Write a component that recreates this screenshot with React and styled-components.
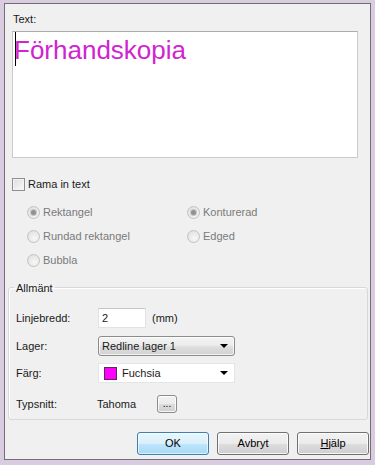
import React from 'react';
import styled, { createGlobalStyle } from 'styled-components';

const Global = createGlobalStyle`
  html, body { margin: 0; padding: 0; background: #d9cbe0; }
  body {
    width: 375px; height: 465px; overflow: hidden;
    font-family: "Liberation Sans", Arial, sans-serif;
    font-size: 11px; line-height: 13px; color: #1a1a1a;
  }
  * { box-sizing: border-box; }
`;

const Window = styled.div`
  margin: 3px 0 0 4px;
  width: 367px;
  height: 457px;
  border: 1px solid #707074;
  background: #f0f0f0;
  display: flex;
  flex-direction: column;
  padding: 0 2px 0 3px;
`;

const TextLabel = styled.div`
  margin: 9px 0 0 5px;
  height: 13px;
`;

const Editor = styled.div`
  position: relative;
  margin: 5px 0 0 4px;
  width: 346px;
  height: 127px;
  background: #fff;
  border: 1px solid #c9cbd0;
  border-top-color: #abadb3;
  padding: 3px 0 0 1px;
  font-size: 26px;
  line-height: 30px;
  color: #d024d0;
`;

const Caret = styled.span`
  position: absolute;
  left: 2px;
  top: 0;
  width: 1px;
  height: 34px;
  background: #000;
`;

const CheckRow = styled.label`
  display: flex;
  align-items: center;
  gap: 3px;
  margin: 20px 0 0 4px;
  height: 13px;
`;

const CheckBox = styled.span`
  width: 13px;
  height: 13px;
  border: 1px solid #8f8f8f;
  background: linear-gradient(135deg, #dcdcdc, #fbfbfb);
  box-shadow: inset 0 0 0 1px #f4f4f4;
`;

const RadioGrid = styled.div`
  display: grid;
  grid-template-columns: 160px auto;
  grid-auto-rows: 13px;
  row-gap: 11px;
  margin: 15px 0 0 19px;
`;

const RadioItem = styled.div`
  display: flex;
  align-items: center;
  gap: 3px;
  color: #7a7a7a;
  grid-column: ${p => p.$col};
  grid-row: ${p => p.$row};
`;

const RadioDot = styled.span`
  position: relative;
  width: 13px;
  height: 13px;
  border-radius: 50%;
  border: 1px solid #c2c2c2;
  background: radial-gradient(circle at 60% 65%, #f8f8f8 0%, #e4e4e4 70%, #d8d8d8 100%);
  &::after {
    content: '';
    display: ${p => (p.$checked ? 'block' : 'none')};
    position: absolute;
    left: 2px; top: 2px;
    width: 7px; height: 7px;
    border-radius: 50%;
    background: radial-gradient(circle, #8a8a8a 0%, #9a9a9a 45%, #c8c8c8 60%, #b4b4b4 100%);
  }
`;

const Group = styled.fieldset`
  margin: 12px 0 0 0;
  padding: 0 0 5px 7px;
  border: 1px solid #d5d9dc;
  border-radius: 3px;
  box-shadow: inset 1px 1px 0 #fff;
  display: flex;
  flex-direction: column;
`;

const Legend = styled.legend`
  margin-left: -2px;
  padding: 3px 2px 0;
  height: 16px;
`;

const Row = styled.div`
  display: flex;
  align-items: center;
  height: 20px;
  margin-top: ${p => p.$top}px;
`;

const RowLabel = styled.span`
  width: 82px;
  flex: none;
`;

const NumInput = styled.div`
  width: 48px;
  height: 20px;
  background: #fff;
  border: 1px solid #e0e2e6;
  border-top-color: #c4c6cb;
  padding: 3px 0 0 3px;
`;

const Unit = styled.span`
  margin-left: 6px;
`;

const Select = styled.div`
  display: flex;
  align-items: center;
  width: 137px;
  height: 20px;
  padding: 0 6px 0 3px;
  border-radius: ${p => (p.$plain ? '0' : '3px')};
  border: 1px solid ${p => (p.$plain ? '#e3e5e8' : '#8c8c8c')};
  background: ${p =>
    p.$plain
      ? '#fff'
      : 'linear-gradient(#f4f4f4 0%, #ececec 45%, #dedede 55%, #d2d2d2 100%)'};
  box-shadow: ${p => (p.$plain ? 'none' : 'inset 0 0 0 1px rgba(255,255,255,0.7)')};
`;

const SelectText = styled.span`
  flex: 1;
  display: flex;
  align-items: center;
  gap: 5px;
`;

const Swatch = styled.span`
  width: 13px;
  height: 13px;
  margin-left: 2px;
  background: #ff00ff;
  border: 1px solid #5a2a5a;
`;

const Arrow = styled.span`
  width: 0;
  height: 0;
  border-left: 4px solid transparent;
  border-right: 4px solid transparent;
  border-top: 4px solid #000;
`;

const FontName = styled.span`
  width: 60px;
  margin-left: -1px;
`;

const SmallButton = styled.button`
  width: 20px;
  height: 18px;
  padding: 0;
  font: inherit;
  font-size: 10px;
  line-height: 14px;
  color: #000;
  border: 1px solid #8c8c8c;
  border-radius: 3px;
  background: linear-gradient(#f2f2f2 0%, #ebebeb 50%, #dddddd 51%, #cfcfcf 100%);
  box-shadow: inset 0 0 0 1px rgba(255,255,255,0.8);
`;

const ButtonBar = styled.div`
  display: flex;
  justify-content: flex-end;
  gap: 8px;
  margin-top: 12px;
  padding-right: 0;
  margin-right: -1px;
`;

const DlgButton = styled.button`
  width: 72px;
  height: 23px;
  padding: 0;
  font: inherit;
  color: #000;
  border-radius: 3px;
  border: 1px solid ${p => (p.$default ? '#3c7fb1' : '#707070')};
  background: ${p =>
    p.$default
      ? 'linear-gradient(#eaf6fd 0%, #d9f0fc 50%, #bee6fd 51%, #a7d9f5 100%)'
      : 'linear-gradient(#f2f2f2 0%, #ebebeb 50%, #dddddd 51%, #cfcfcf 100%)'};
  box-shadow: inset 0 0 0 1px ${p => (p.$default ? 'rgba(255,255,255,0.6)' : 'rgba(255,255,255,0.8)')};
`;

const U = styled.span`
  text-decoration: underline;
`;

export default function App() {
  return (
    <>
      <Global />
      <Window>
        <TextLabel>Text:</TextLabel>
        <Editor>
          <Caret />
          Förhandskopia
        </Editor>
        <CheckRow>
          <CheckBox />
          Rama in text
        </CheckRow>
        <RadioGrid>
          <RadioItem $col={1} $row={1}><RadioDot $checked />Rektangel</RadioItem>
          <RadioItem $col={1} $row={2}><RadioDot />Rundad rektangel</RadioItem>
          <RadioItem $col={1} $row={3}><RadioDot />Bubbla</RadioItem>
          <RadioItem $col={2} $row={1}><RadioDot $checked />Konturerad</RadioItem>
          <RadioItem $col={2} $row={2}><RadioDot />Edged</RadioItem>
        </RadioGrid>
        <Group>
          <Legend>Allmänt</Legend>
          <Row $top={13}>
            <RowLabel>Linjebredd:</RowLabel>
            <NumInput>2</NumInput>
            <Unit>(mm)</Unit>
          </Row>
          <Row $top={8}>
            <RowLabel>Lager:</RowLabel>
            <Select>
              <SelectText>Redline lager 1</SelectText>
              <Arrow />
            </Select>
          </Row>
          <Row $top={7}>
            <RowLabel>Färg:</RowLabel>
            <Select $plain>
              <SelectText><Swatch />Fuchsia</SelectText>
              <Arrow />
            </Select>
          </Row>
          <Row $top={11}>
            <RowLabel>Typsnitt:</RowLabel>
            <FontName>Tahoma</FontName>
            <SmallButton>...</SmallButton>
          </Row>
        </Group>
        <ButtonBar>
          <DlgButton $default>OK</DlgButton>
          <DlgButton>Avbryt</DlgButton>
          <DlgButton><U>H</U>jälp</DlgButton>
        </ButtonBar>
      </Window>
    </>
  );
}
